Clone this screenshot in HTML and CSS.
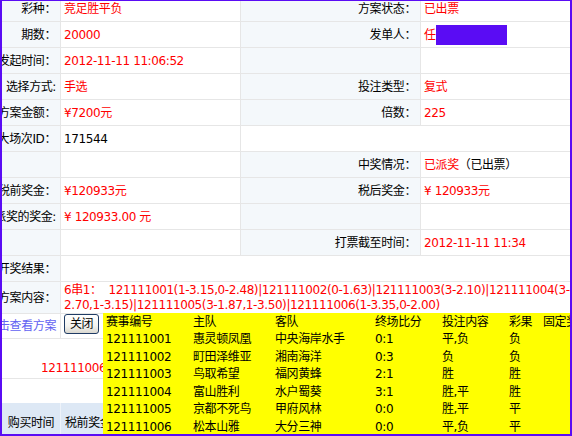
FILE: index.html
```html
<!DOCTYPE html>
<html lang="zh-CN">
<head>
<meta charset="utf-8">
<title>方案详情</title>
<link rel="stylesheet" href="styles.css">
</head>
<body>
<div class="frame">
  <div class="sheet">
    <div class="lbl">彩种：</div><div class="val red">竞足胜平负</div><div class="lbl">方案状态：</div><div class="val red">已出票</div>
    <div class="lbl">期数：</div><div class="val red">20000</div><div class="lbl">发单人：</div><div class="val red">任<span class="mask"></span></div>
    <div class="lbl">发起时间：</div><div class="val red">2012-11-11 11:06:52</div><div class="lbl"></div><div class="val"></div>
    <div class="lbl">选择方式:</div><div class="val red">手选</div><div class="lbl">投注类型：</div><div class="val red">复式</div>
    <div class="lbl">方案金额：</div><div class="val red">¥7200元</div><div class="lbl">倍数：</div><div class="val red">225</div>
    <div class="lbl">大场次ID：</div><div class="val">171544</div><div class="val span2"></div>
    <div class="lbl"></div><div class="val"></div><div class="lbl">中奖情况：</div><div class="val"><span class="red">已派奖</span>（已出票）</div>
    <div class="lbl">税前奖金：</div><div class="val red">¥120933元</div><div class="lbl">税后奖金：</div><div class="val red">¥ 120933元</div>
    <div class="lbl">派奖的奖金:</div><div class="val red">¥ 120933.00 元</div><div class="lbl"></div><div class="val"></div>
    <div class="lbl"></div><div class="val"></div><div class="lbl">打票截至时间：</div><div class="val red">2012-11-11 11:34</div>
    <div class="lbl">开奖结果：</div><div class="val span3"></div>
    <div class="lbl">方案内容：</div><div class="val span3 red two">6串1：&nbsp; 121111001(1-3.15,0-2.48)|121111002(0-1.63)|121111003(3-2.10)|121111004(3-<br>2.70,1-3.15)|121111005(3-1.87,1-3.50)|121111006(1-3.35,0-2.00)</div>
    <div class="lbl link-cell"><a class="link" href="#">点击查看方案</a></div><div class="val top"><button class="btn" type="button">关闭</button></div><div class="val span2"></div>
    <div class="val span4 red bottom">121111006</div>
    <div class="spacer"></div>
    <div class="head head-first">购买时间</div><div class="head">税前奖金</div><div class="head"></div><div class="head"></div>
  </div>

  <div class="popup">
    <div>赛事编号</div><div>主队</div><div>客队</div><div>终场比分</div><div>投注内容</div><div>彩果</div><div>固定奖金</div>
    <div>121111001</div><div>惠灵顿凤凰</div><div>中央海岸水手</div><div>0:1</div><div>平,负</div><div>负</div><div></div>
    <div>121111002</div><div>町田泽维亚</div><div>湘南海洋</div><div>0:3</div><div>负</div><div>负</div><div></div>
    <div>121111003</div><div>鸟取希望</div><div>福冈黄蜂</div><div>2:1</div><div>胜</div><div>胜</div><div></div>
    <div>121111004</div><div>富山胜利</div><div>水户蜀葵</div><div>3:1</div><div>胜,平</div><div>胜</div><div></div>
    <div>121111005</div><div>京都不死鸟</div><div>甲府风林</div><div>0:0</div><div>胜,平</div><div>平</div><div></div>
    <div>121111006</div><div>松本山雅</div><div>大分三神</div><div>0:0</div><div>平,负</div><div>平</div><div></div>
  </div>
</div>
</body>
</html>
```

FILE: styles.css
```css
html, body {
  margin: 0;
  padding: 0;
  background: #fff;
}

body {
  font-family: "DejaVu Sans", "Noto Sans CJK SC", sans-serif;
  font-size: 12px;
  letter-spacing: -0.4px;
  color: #000;
}

.frame {
  position: relative;
  width: 572px;
  height: 436px;
  box-sizing: border-box;
  border: 2px solid #5a0cf4;
  border-top-width: 1px;
  overflow: hidden;
  background: #fff;
}

.sheet {
  display: grid;
  grid-template-columns: 59px 180px 180px 180px;
  grid-template-rows: repeat(11, 26px) 32px 25px 40px 24px 40px;
  margin-top: -5px;
}

.sheet > div {
  box-sizing: border-box;
  border-right: 1px solid #e6e6e6;
  border-bottom: 1px solid #e6e6e6;
  display: flex;
  align-items: center;
  white-space: nowrap;
  line-height: 16px;
  min-width: 0;
}

.lbl {
  background: #f4f8fb;
  justify-content: flex-end;
  padding-right: 4px;
}

.val {
  background: #fff;
  padding-left: 3px;
}

.red {
  color: #ff0000;
}

.span2 { grid-column: span 2; }
.span3 { grid-column: span 3; }
.span4 { grid-column: span 4; }

.two {
  line-height: 15px !important;
}

.top {
  align-items: flex-start !important;
}

.bottom {
  align-items: flex-end !important;
  padding-left: 39px;
  padding-bottom: 2px;
}

.mask {
  display: inline-block;
  width: 71px;
  height: 20px;
  background: #5a0cf4;
  vertical-align: middle;
}

.link-cell {
  background: #fff !important;
}

.link {
  color: #6262f2;
  text-decoration: none;
}

.btn {
  width: 35px;
  height: 20px;
  box-sizing: border-box;
  margin: 0;
  padding: 0;
  border: 1px solid #1f3b64;
  border-radius: 3px;
  background: linear-gradient(#ffffff, #f4f4f0 60%, #d9d7cf);
  font: inherit;
  letter-spacing: inherit;
  color: #000;
  display: flex;
  align-items: center;
  justify-content: center;
}

.sheet > .spacer {
  grid-column: span 4;
  border: none;
}

.sheet > .head {
  background: #dde8f5;
  border-bottom: none;
  border-right: 1px solid #eef3fa;
  padding-left: 4px;
}

.sheet > .head-first {
  justify-content: center;
  padding-left: 0;
}

.popup {
  position: absolute;
  left: 101px;
  top: 312px;
  width: 480px;
  height: 130px;
  box-sizing: border-box;
  padding-left: 3px;
  background: #ffff00;
  display: grid;
  grid-template-columns: 87px 82px 100px 67px 67px 34px 80px;
  grid-auto-rows: 17.5px;
  align-items: center;
  line-height: 16px;
  white-space: nowrap;
  color: #000;
}
```
